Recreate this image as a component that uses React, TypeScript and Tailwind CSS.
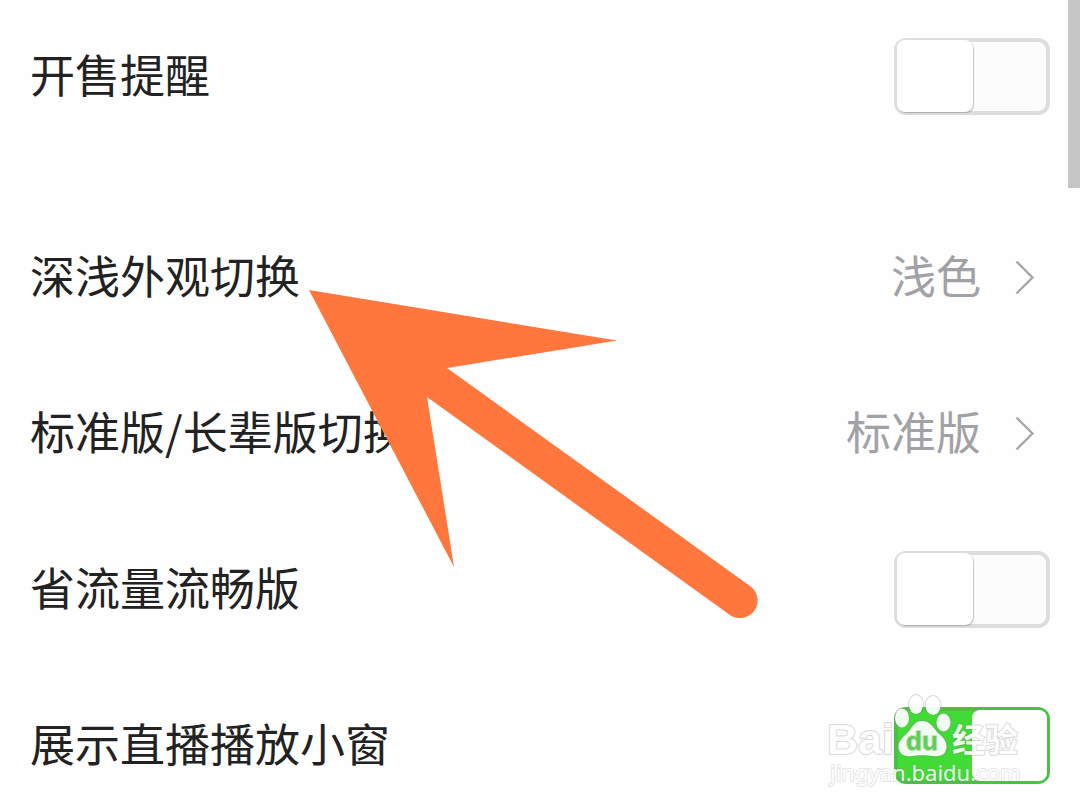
import { useId } from "react";

type ToggleRowProps = {
  label: string;
  defaultChecked?: boolean;
};

type LinkRowProps = {
  label: string;
  value: string;
};

function ToggleRow({ label, defaultChecked }: ToggleRowProps) {
  const id = useId();

  return (
    <li className="flex h-[156px] items-center justify-between px-[30px]">
      <label htmlFor={id} className="pb-1 text-[45px] leading-[60px]">
        {label}
      </label>
      <input
        id={id}
        type="checkbox"
        role="switch"
        defaultChecked={defaultChecked}
        className="relative h-[77px] w-[156px] shrink-0 cursor-pointer appearance-none rounded-xl border-4 border-[#dddddd] bg-[#fcfcfc] before:absolute before:-top-[2px] before:-left-px before:h-[72px] before:w-[76px] before:rounded-lg before:bg-white before:shadow-[1px_1px_1px_rgba(0,0,0,0.22)] checked:border-[#4cc045] checked:bg-[#41db35] checked:before:-top-px checked:before:left-[74px] checked:before:h-[71px] checked:before:w-[75px] checked:before:shadow-none"
      />
    </li>
  );
}

function LinkRow({ label, value }: LinkRowProps) {
  return (
    <li>
      <a
        href="#"
        className="flex h-[156px] items-center justify-between px-[30px]"
      >
        <span className="pb-1 text-[45px] leading-[60px]">{label}</span>
        <span className="flex items-center gap-[29px]">
          <span className="pb-1 text-[45px] leading-[60px] text-[#a2a2a6]">
            {value}
          </span>
          <svg
            viewBox="0 0 40 40"
            fill="none"
            stroke="#a8a8ac"
            strokeWidth="2.4"
            className="size-10"
            aria-hidden="true"
          >
            <path d="M6.5 4.5 22.5 20.5 6.5 36.5" />
          </svg>
        </span>
      </a>
    </li>
  );
}

function PointerArrow() {
  return (
    <svg
      viewBox="0 0 450 330"
      fill="#ff773c"
      className="pointer-events-none absolute top-[290px] left-[309px] h-[330px] w-[450px]"
      aria-hidden="true"
    >
      <path d="M0 0 308 50.500 138 78 441 296A17.500 17.500 0 0 1 421 325L118 107 145 277Z" />
    </svg>
  );
}

function Watermark() {
  return (
    <svg
      viewBox="0 0 200 100"
      fill="#ffffff"
      fillOpacity="0.93"
      stroke="#808080"
      strokeOpacity="0.3"
      strokeWidth="2"
      strokeLinejoin="round"
      paintOrder="stroke"
      className="pointer-events-none absolute top-[690px] right-[54px] h-[100px] w-[200px]"
      aria-label="Baidu"
    >
      <text
        x="1"
        y="64"
        className="font-['Liberation_Sans',sans-serif] text-[43px] font-bold"
      >
        Bai
      </text>
      <ellipse cx="76" cy="28" rx="7" ry="9.500" />
      <ellipse cx="90" cy="14.500" rx="7" ry="9.500" />
      <ellipse cx="107" cy="15.500" rx="7.500" ry="9.500" />
      <ellipse cx="117.500" cy="32.500" rx="7" ry="9" />
      <path d="M96 31C104 31 107 37 111 42C116 47 121 50 120.500 57C120 65 114 67 107 66C101 65 92 65 86 66C78 67 73 64 72.500 57C72 50 78 47 83 41C87 36 89 31 96 31Z" />
      <text
        x="80"
        y="60"
        fill="#4cd042"
        className="font-['Liberation_Sans',sans-serif] text-[26px] font-bold"
      >
        du
      </text>
      <text
        x="126"
        y="62"
        className="font-['Liberation_Sans','Noto_Sans_CJK_SC',sans-serif] text-[33px] font-bold"
      >
        经验
      </text>
      <text
        x="4"
        y="91"
        strokeOpacity="0.2"
        className="font-['Noto_Sans',sans-serif] text-[22px]"
      >
        jingyan.baidu.com
      </text>
    </svg>
  );
}

export default function App() {
  return (
    <main className="relative h-screen overflow-hidden bg-[#fefefe] font-['Noto_Sans_CJK_SC',sans-serif] text-[#222222]">
      <ul className="-mt-[2px] mb-[45px]">
        <ToggleRow label="开售提醒" />
      </ul>
      <ul>
        <LinkRow label="深浅外观切换" value="浅色" />
        <LinkRow label="标准版/长辈版切换" value="标准版" />
        <ToggleRow label="省流量流畅版" />
        <ToggleRow label="展示直播播放小窗" defaultChecked />
      </ul>

      <div className="absolute top-0 right-0 h-[188px] w-3 bg-[#c6c6c6]" />
      <PointerArrow />
      <Watermark />
    </main>
  );
}
